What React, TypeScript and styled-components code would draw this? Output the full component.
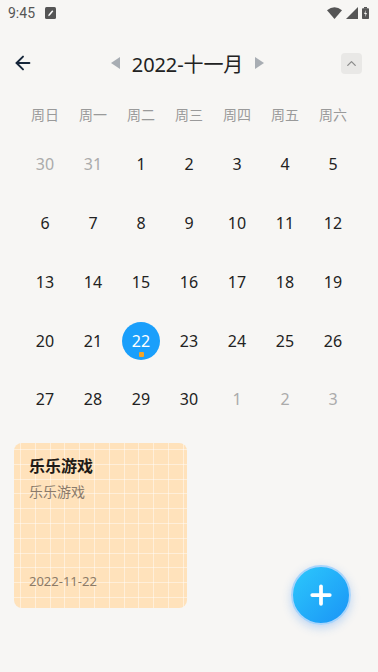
import React from "react";
import styled, { createGlobalStyle } from "styled-components";
import { ArrowLeft, ChevronUp, Plus } from "lucide-react";

const Global = createGlobalStyle`
  html, body { margin: 0; padding: 0; background: #f7f6f4; }
  body { font-family: "Noto Sans", "Noto Sans CJK SC", sans-serif; }
  * { box-sizing: border-box; }
`;

const Page = styled.div`
  position: relative;
  width: 378px;
  height: 672px;
  background: #f7f6f4;
  overflow: hidden;
`;

const StatusBar = styled.div`
  height: 26px;
  display: flex;
  align-items: center;
  padding: 0 8px;
  color: #555;
  font-family: Roboto, "Noto Sans", sans-serif;
  font-size: 14px;
`;

const StatusLeft = styled.div`
  display: flex;
  align-items: center;
  gap: 10px;
  flex: 1;
`;

const StatusRight = styled.div`
  display: flex;
  align-items: center;
  gap: 4px;
  padding-right: 1px;
`;

const Header = styled.div`
  height: 74px;
  display: flex;
  align-items: center;
  padding: 0 14px 0 12px;
`;

const BackBtn = styled.div`
  width: 22px;
  display: flex;
  align-items: center;
  color: #16263a;
`;

const TitleWrap = styled.div`
  flex: 1;
  display: flex;
  align-items: center;
  justify-content: center;
  gap: 12px;
`;

const Title = styled.div`
  font-size: 20px;
  color: #222;
  letter-spacing: -0.1px;
`;

const Tri = styled.div<{ $dir: "left" | "right" }>`
  width: 0;
  height: 0;
  border-top: 6px solid transparent;
  border-bottom: 6px solid transparent;
  ${(p) =>
    p.$dir === "left"
      ? "border-right: 9px solid #a8adb3;"
      : "border-left: 9px solid #a8adb3;"}
`;

const UpBtn = styled.div`
  width: 21px;
  height: 21px;
  border-radius: 4px;
  background: #e9e8e6;
  display: flex;
  align-items: center;
  justify-content: center;
  color: #8a8a8a;
  margin-right: 2px;
`;

const Grid = styled.div`
  display: grid;
  grid-template-columns: repeat(7, 48px);
  padding: 0 21px;
`;

const WeekCell = styled.div`
  height: 28px;
  display: flex;
  align-items: center;
  justify-content: center;
  font-size: 14px;
  color: #9a9a9a;
`;

const Dates = styled(Grid)`
  margin-top: 7px;
  grid-auto-rows: 58.75px;
`;

const DayCell = styled.div`
  display: flex;
  align-items: center;
  justify-content: center;
`;

const Day = styled.div<{ $muted?: boolean; $selected?: boolean }>`
  position: relative;
  width: 38px;
  height: 38px;
  border-radius: 50%;
  display: flex;
  align-items: center;
  justify-content: center;
  font-size: 16px;
  color: ${(p) => (p.$selected ? "#fff" : p.$muted ? "#ababab" : "#222")};
  background: ${(p) => (p.$selected ? "#1a9ffb" : "transparent")};
`;

const Dot = styled.span`
  position: absolute;
  left: 50%;
  bottom: 3px;
  width: 5px;
  height: 5px;
  margin-left: -2.5px;
  border-radius: 1px;
  background: #f5a524;
`;

const Card = styled.div`
  margin: 14px 0 0 14px;
  width: 173px;
  height: 165px;
  border-radius: 8px;
  background-color: #ffe2bb;
  background-image:
    repeating-linear-gradient(90deg, transparent 0 6px, rgba(255,255,255,0.45) 6px 7px, transparent 7px 14.8px),
    repeating-linear-gradient(180deg, transparent 0 6px, rgba(255,255,255,0.45) 6px 7px, transparent 7px 14.8px);
  padding: 12px 15px 0;
  display: flex;
  flex-direction: column;
`;

const CardTitle = styled.div`
  font-size: 16px;
  font-weight: 700;
  color: #1e1a16;
  line-height: 22px;
`;

const CardSub = styled.div`
  margin-top: 4px;
  font-size: 14px;
  color: #8a7b6c;
  line-height: 22px;
`;

const CardDate = styled.div`
  margin-top: auto;
  margin-bottom: 18px;
  font-size: 13px;
  color: #8c7b68;
  line-height: 18px;
`;

const Fab = styled.div`
  position: absolute;
  left: 291px;
  top: 565px;
  width: 60px;
  height: 60px;
  border-radius: 50%;
  background: linear-gradient(135deg, #2cc8fc 0%, #1a94f6 100%);
  border: 2px solid #a9d4fb;
  box-shadow: 0 3px 10px rgba(60, 140, 240, 0.3);
  display: flex;
  align-items: center;
  justify-content: center;
  color: #fff;
`;

const weekdays = ["周日", "周一", "周二", "周三", "周四", "周五", "周六"];

type D = { n: number; muted?: boolean };
const days: D[] = [
  { n: 30, muted: true },
  { n: 31, muted: true },
  ...Array.from({ length: 30 }, (_, i) => ({ n: i + 1 })),
  { n: 1, muted: true },
  { n: 2, muted: true },
  { n: 3, muted: true },
];

export default function App() {
  return (
    <Page>
      <Global />
      <StatusBar>
        <StatusLeft>
          <span>9:45</span>
          <svg width="11" height="12" viewBox="0 0 11 12">
            <rect x="0" y="0" width="11" height="12" rx="1.5" fill="#555" />
            <path d="M3.2 9.2 L3.6 7.4 L7.2 3.2 L8.3 4.2 L4.8 8.6 Z" fill="#fff" />
          </svg>
        </StatusLeft>
        <StatusRight>
          <svg width="15" height="12" viewBox="0 0 15 12">
            <path d="M0 3.2 Q7.5 -2.6 15 3.2 L7.5 12 Z" fill="#555" />
          </svg>
          <svg width="12" height="12" viewBox="0 0 12 12">
            <path d="M12 0 L12 12 L0 12 Z" fill="#555" />
          </svg>
          <svg width="7" height="12" viewBox="0 0 7 12">
            <rect x="2" y="0" width="3" height="1.5" fill="#555" />
            <rect x="0" y="1.2" width="7" height="10.8" rx="0.8" fill="#555" />
            <path d="M4 3 L2 7 L3.5 7 L3 10 L5 6 L3.5 6 Z" fill="#f7f6f4" />
          </svg>
        </StatusRight>
      </StatusBar>
      <Header>
        <BackBtn>
          <ArrowLeft size={22} strokeWidth={2.1} />
        </BackBtn>
        <TitleWrap>
          <Tri $dir="left" />
          <Title>2022-十一月</Title>
          <Tri $dir="right" />
        </TitleWrap>
        <UpBtn>
          <ChevronUp size={15} strokeWidth={2} />
        </UpBtn>
      </Header>
      <Grid>
        {weekdays.map((w) => (
          <WeekCell key={w}>{w}</WeekCell>
        ))}
      </Grid>
      <Dates>
        {days.map((d, i) => {
          const sel = !d.muted && d.n === 22;
          return (
            <DayCell key={i}>
              <Day $muted={d.muted} $selected={sel}>
                {d.n}
                {sel && <Dot />}
              </Day>
            </DayCell>
          );
        })}
      </Dates>
      <Card>
        <CardTitle>乐乐游戏</CardTitle>
        <CardSub>乐乐游戏</CardSub>
        <CardDate>2022-11-22</CardDate>
      </Card>
      <Fab>
        <Plus size={30} strokeWidth={3} />
      </Fab>
    </Page>
  );
}
